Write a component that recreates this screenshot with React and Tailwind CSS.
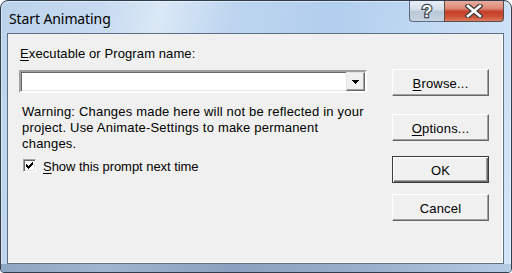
import React from "react";

function Btn({ children, def = false, className = "" }) {
  const base =
    "w-[97px] h-[27px] flex items-center justify-center pt-[2px] bg-[#f0f0f0] text-[13px] leading-[15px] text-black";
  const style = def
    ? "border border-[#3c3c3c] shadow-[inset_1px_1px_0_#ffffff,inset_-1px_-1px_0_#696969,inset_-2px_-2px_0_#a0a0a0]"
    : "border border-t-white border-l-white border-r-[#696969] border-b-[#696969] shadow-[inset_-1px_-1px_0_#a0a0a0]";
  return <div className={`${base} ${style} ${className}`}>{children}</div>;
}

function U({ children }) {
  return <span className="underline underline-offset-[2px] decoration-1">{children}</span>;
}

export default function App() {
  return (
    <div className="w-[512px] h-[273px] font-['Liberation_Sans',Arial,sans-serif]">
      <div className="w-full h-full flex flex-col rounded-t-[8px] rounded-b-[4px] border border-[#2f3d4d] bg-[linear-gradient(100deg,#bcd3ec_0%,#c6daf0_18%,#dae8f6_29%,#bdd5ef_42%,#b2ceee_60%,#c2daf3_80%,#d3e5f8_100%)] shadow-[inset_0_0_0_1px_rgba(255,255,255,0.45)] overflow-hidden">
        {/* Title bar */}
        <div className="h-[32px] flex items-start">
          <div className="pl-[8px] mt-[8px] leading-[20px] text-[14px] tracking-[-0.1px] text-black font-['Noto_Sans',sans-serif]">
            Start Animating
          </div>
          <div className="ml-auto mr-[7px] -mt-[1px] flex">
            <div className="w-[35px] h-[22px] rounded-bl-[4px] border border-t-0 border-r-0 border-[#5c6b7d] bg-[linear-gradient(to_bottom,#e9eff6_0%,#d6e0eb_45%,#b9c8d8_55%,#c6d3e1_100%)] flex items-center justify-center">
              <span className="text-white font-bold text-[17px] leading-none font-['Liberation_Sans',sans-serif] [-webkit-text-stroke:2.5px_#3e4753] [paint-order:stroke_fill] mt-[1px]">
                ?
              </span>
            </div>
            <div className="w-[60px] h-[22px] rounded-br-[4px] border border-t-0 border-[#5c4b4b] bg-[linear-gradient(to_bottom,#eab0a3_0%,#dd8a76_40%,#c4402a_55%,#cf5237_80%,#de7c5f_100%)] flex items-center justify-center">
              <svg width="18" height="14" viewBox="0 0 18 14">
                <path d="M3 2 L15 12 M15 2 L3 12" stroke="#3b3b3b" strokeWidth="5" strokeLinecap="square" />
                <path d="M3 2 L15 12 M15 2 L3 12" stroke="#ffffff" strokeWidth="2.6" strokeLinecap="square" />
              </svg>
            </div>
          </div>
        </div>

        {/* Client */}
        <div className="flex-1 ml-[6px] mr-[7px] border border-[#5d6f84] bg-[#f0f0f0] flex justify-between text-[13px] tracking-[0.2px] text-black shadow-[inset_-1px_-1px_0_#ffffff]">
          <div className="ml-[11px] w-[348px] pt-[12px] flex flex-col">
            <div className="leading-[15px] pl-[1px] tracking-[0.1px]">
              <U>E</U>xecutable or Program name:
            </div>
            <div className="mt-[9px] h-[23px] w-[348px] border-2 border-t-[#a0a0a0] border-l-[#a0a0a0] border-b-white border-r-white shadow-[inset_1px_1px_0_#696969,inset_-1px_-1px_0_#e3e3e3] bg-white flex justify-end">
              <div className="w-[19px] h-full bg-[#f0f0f0] border border-t-[#e3e3e3] border-l-[#e3e3e3] border-r-[#696969] border-b-[#696969] shadow-[inset_-1px_-1px_0_#a0a0a0] flex items-center justify-center">
                <svg width="7" height="4" viewBox="0 0 7 4" shapeRendering="crispEdges">
                  <path d="M0 0 H7 L3.5 4 Z" fill="#000" />
                </svg>
              </div>
            </div>
            <div className="mt-[11px] ml-[3px] w-[345px] leading-[16px]">
              Warning: Changes made here will not be reflected in your project. Use Animate-Settings to make permanent changes.
            </div>
            <div className="mt-[7px] ml-[4px] flex items-start">
              <div className="w-[13px] h-[13px] border border-t-[#a0a0a0] border-l-[#a0a0a0] border-b-white border-r-white shadow-[inset_1px_1px_0_#696969,inset_-1px_-1px_0_#e3e3e3] bg-white flex items-center justify-center">
                <svg width="7" height="7" viewBox="0 0 7 7" shapeRendering="crispEdges">
                  <path
                    d="M6 0h1v1h-1z M5 1h2v1h-2z M0 2h1v1h-1z M4 2h3v1h-3z M0 3h2v1h-2z M3 3h3v1h-3z M0 4h5v1h-5z M1 5h3v1h-3z M2 6h1v1h-1z"
                    fill="#000"
                  />
                </svg>
              </div>
              <div className="ml-[7px] leading-[15px] tracking-[-0.05px]">
                <U>S</U>how this prompt next time
              </div>
            </div>
          </div>

          <div className="mr-[14px] w-[97px] pt-[35px] flex flex-col">
            <Btn>
              <span>
                <U>B</U>rowse...
              </span>
            </Btn>
            <Btn className="mt-[18px]">
              <span>
                <U>O</U>ptions...
              </span>
            </Btn>
            <Btn def className="mt-[15px]">
              OK
            </Btn>
            <Btn className="mt-[11px]">Cancel</Btn>
          </div>
        </div>

        {/* Bottom frame */}
        <div className="h-[8px] bg-[linear-gradient(90deg,#8ea6c1_0%,#9fb6cf_20%,#8aa2bf_45%,#97afca_70%,#b5cbe4_100%)]" />
      </div>
    </div>
  );
}
